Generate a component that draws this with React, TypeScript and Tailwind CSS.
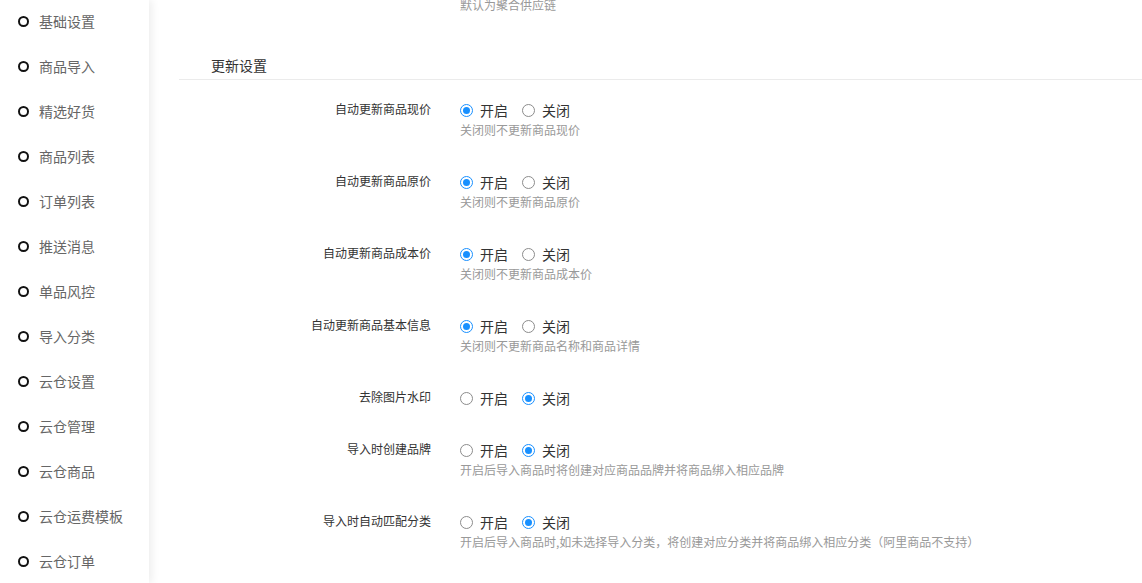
import React from "react";

const navItems = [
  "基础设置",
  "商品导入",
  "精选好货",
  "商品列表",
  "订单列表",
  "推送消息",
  "单品风控",
  "导入分类",
  "云仓设置",
  "云仓管理",
  "云仓商品",
  "云仓运费模板",
  "云仓订单",
];

type Row = { label: string; on: boolean; help?: string };

const rows: Row[] = [
  { label: "自动更新商品现价", on: true, help: "关闭则不更新商品现价" },
  { label: "自动更新商品原价", on: true, help: "关闭则不更新商品原价" },
  { label: "自动更新商品成本价", on: true, help: "关闭则不更新商品成本价" },
  { label: "自动更新商品基本信息", on: true, help: "关闭则不更新商品名称和商品详情" },
  { label: "去除图片水印", on: false },
  { label: "导入时创建品牌", on: false, help: "开启后导入商品时将创建对应商品品牌并将商品绑入相应品牌" },
  {
    label: "导入时自动匹配分类",
    on: false,
    help: "开启后导入商品时,如未选择导入分类，将创建对应分类并将商品绑入相应分类（阿里商品不支持）",
  },
];

function Radio({ checked, text }: { checked: boolean; text: string }) {
  return (
    <div className="flex items-center">
      {checked ? (
        <span className="w-[13px] h-[13px] rounded-full border border-[#1890ff] flex items-center justify-center">
          <span className="w-[7px] h-[7px] rounded-full bg-[#1890ff]" />
        </span>
      ) : (
        <span className="w-[13px] h-[13px] rounded-full border border-[#8c8c8c]" />
      )}
      <span className="ml-[7px] text-[14px] leading-[22px] text-[#333]">{text}</span>
    </div>
  );
}

export default function App() {
  return (
    <div
      className="flex h-[583px] w-full overflow-hidden bg-white"
      style={{ fontFamily: '"Noto Sans CJK SC", "Noto Sans", sans-serif' }}
    >
      <aside className="w-[149px] shrink-0 bg-white shadow-[3px_0_8px_rgba(0,0,0,0.07)] z-10">
        <div className="-mt-[1px]">
          {navItems.map((n) => (
            <div key={n} className="h-[45px] flex items-center pl-[18px]">
              <span className="w-[11px] h-[11px] rounded-full border-2 border-[#111]" />
              <span className="ml-[10px] text-[14px] text-[#666]">{n}</span>
            </div>
          ))}
        </div>
      </aside>
      <main className="flex-1 pl-[30px]">
        <div className="pl-[281px] -mt-[3px] text-[12px] leading-[16px] text-[#999]">默认为聚合供应链</div>
        <div className="mt-[42px] border-b border-[#ebebeb] pb-[4px] pl-[32px] text-[14px] leading-[20px] text-[#333]">
          更新设置
        </div>
        <div className="pt-[19px]">
          {rows.map((r) => (
            <div key={r.label} className="flex mb-[30px]">
              <div className="w-[281px] shrink-0 pr-[29px] pt-[1px] text-right text-[12px] leading-[18px] text-[#333]">
                {r.label}
              </div>
              <div className="flex flex-col">
                <div className="flex items-center gap-[14px] h-[22px]">
                  <Radio checked={r.on} text="开启" />
                  <Radio checked={!r.on} text="关闭" />
                </div>
                {r.help && (
                  <div className="text-[12px] leading-[16px] pt-[1px] pb-[3px] text-[#999]">{r.help}</div>
                )}
              </div>
            </div>
          ))}
        </div>
      </main>
    </div>
  );
}
